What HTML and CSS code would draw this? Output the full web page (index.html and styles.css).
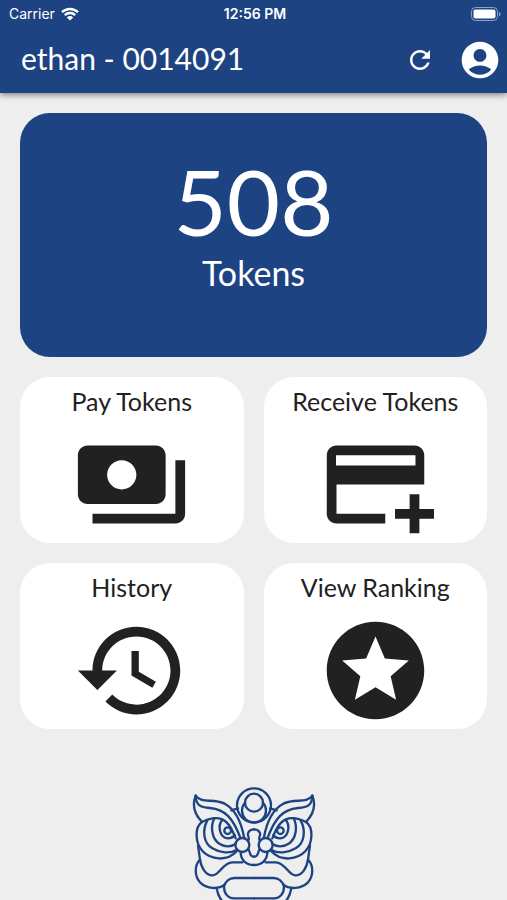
FILE: index.html
```html
<!DOCTYPE html>
<html lang="en">
<head>
  <meta charset="UTF-8">
  <meta name="viewport" content="width=device-width, initial-scale=1">
  <title>Tokens</title>
  <link rel="stylesheet" href="styles.css">
</head>
<body>

<header class="header">
  <div class="status">
    <div class="carrier">
      <span>Carrier</span>
      <svg class="wifi" viewBox="0 0 18 14" aria-hidden="true">
        <path d="M1 5.2a11.5 11.5 0 0 1 16 0M3.8 8.1a7.5 7.5 0 0 1 10.4 0" fill="none" stroke="#fff" stroke-width="2.4"/>
        <path d="M9 13.6 5.8 10.4a4.6 4.6 0 0 1 6.4 0z" fill="#fff"/>
      </svg>
    </div>
    <span class="time">12:56 PM</span>
    <svg class="battery" viewBox="0 0 30 14" aria-hidden="true">
      <rect x=".5" y=".5" width="26" height="13" rx="4" fill="none" stroke="#8ea3c6"/>
      <rect x="2.5" y="2.5" width="22" height="9" rx="2" fill="#fff"/>
      <path d="M28 4.7c2 .8 2 3.8 0 4.6z" fill="#8ea3c6"/>
    </svg>
  </div>
  <div class="toolbar">
    <h1 class="title">ethan - 0014091</h1>
    <button class="icon-button" aria-label="Refresh">
      <svg class="refresh" viewBox="0 0 24 24"><path d="M17.65 6.35C16.2 4.9 14.21 4 12 4c-4.42 0-7.99 3.58-7.99 8s3.57 8 7.99 8c3.73 0 6.84-2.55 7.73-6h-2.08c-.82 2.33-3.04 4-5.65 4-3.31 0-6-2.69-6-6s2.69-6 6-6c1.66 0 3.14.69 4.22 1.78L13 11h7V4l-2.35 2.35z"/></svg>
    </button>
    <button class="icon-button" aria-label="Account">
      <svg class="account" viewBox="0 0 24 24"><path d="M12 2C6.48 2 2 6.48 2 12s4.48 10 10 10 10-4.48 10-10S17.52 2 12 2zm0 4c1.93 0 3.5 1.57 3.5 3.5S13.93 13 12 13s-3.5-1.57-3.5-3.5S10.07 6 12 6zm0 14c-2.03 0-4.43-.82-6.14-2.88C7.55 15.8 9.68 15 12 15s4.45.8 6.14 2.12C16.43 19.18 14.03 20 12 20z"/></svg>
    </button>
  </div>
</header>

<main class="content">
  <section class="balance">
    <p class="amount">508</p>
    <p class="unit">Tokens</p>
  </section>

  <div class="menu">
    <button class="card">
      <span class="label">Pay Tokens</span>
      <svg class="card-icon" viewBox="0 0 24 24" aria-hidden="true"><path d="M19 14V6c0-1.1-.9-2-2-2H3c-1.1 0-2 .9-2 2v8c0 1.1.9 2 2 2h14c1.1 0 2-.9 2-2zm-9-1c-1.66 0-3-1.34-3-3s1.34-3 3-3 3 1.34 3 3-1.34 3-3 3zm13-6v11c0 1.1-.9 2-2 2H4v-2h17V7h2z"/></svg>
    </button>
    <button class="card">
      <span class="label">Receive Tokens</span>
      <svg class="card-icon" viewBox="0 0 24 24" aria-hidden="true"><path d="M20 4H4c-1.11 0-1.99.89-1.99 2L2 18c0 1.11.89 2 2 2h10v-2H4v-6h18V6c0-1.11-.89-2-2-2zm.2 4.1H3.9V6h16.3v2.1zM24 17v2h-3v3h-2v-3h-3v-2h3v-3h2v3h3z"/></svg>
    </button>
    <button class="card">
      <span class="label">History</span>
      <svg class="card-icon" viewBox="0 0 24 24" aria-hidden="true"><path d="M13 3c-4.97 0-9 4.03-9 9H1l3.89 3.89.07.14L9 12H6c0-3.87 3.13-7 7-7s7 3.13 7 7-3.13 7-7 7c-1.93 0-3.68-.79-4.94-2.06l-1.42 1.42C8.27 19.99 10.51 21 13 21c4.97 0 9-4.03 9-9s-4.03-9-9-9zm-1 5v5l4.28 2.54.72-1.21-3.5-2.08V8H12z"/></svg>
    </button>
    <button class="card">
      <span class="label">View Ranking</span>
      <svg class="card-icon" viewBox="0 0 24 24" aria-hidden="true"><path d="M11.99 2C6.47 2 2 6.48 2 12s4.47 10 9.99 10C17.52 22 22 17.52 22 12S17.52 2 11.99 2zm4.24 16L12 15.45 7.77 18l1.12-4.81-3.73-3.23 4.92-.42L12 5l1.92 4.53 4.92.42-3.73 3.23L16.23 18z"/></svg>
    </button>
  </div>

  <!-- lion head: left half is drawn once and mirrored -->
  <svg class="lion" viewBox="36 36 372 390" aria-hidden="true">
    <g id="half">
      <path d="M47 62C35 92 45 119 66 141C86 131 108 126 126 133C148 142 158 168 167 190"/>
      <path d="M47 62C66 88 98 68 134 86C168 104 184 143 192 186"/>
      <path d="M47 62C48 90 60 97 90 99C137 103 160 132 181 188"/>
      <path d="M154 106L174 100"/>
      <path d="M66 141C44 156 44 203 68 229C91 253 140 262 170 229"/>
      <path d="M82 136C66 166 70 204 97 220C120 234 150 237 171 224"/>
      <path d="M103 130C90 156 96 192 118 206C134 216 152 216 167 207"/>
      <path d="M127 134C111 154 120 188 143 190C153 190 160 186 164 180"/>
      <circle cx="143" cy="167" r="10"/>
      <circle cx="187" cy="210" r="21"/>
      <path d="M205 196C211 187 199 181 205 172Q210 163 222 163"/>
      <path d="M205 222C211 229 207 245 222 245"/>
      <path d="M182 232C182 257 201 270 222 270"/>
      <path d="M54 211L60 254C43 271 43 302 60 322C80 342 116 344 134 329"/>
      <path d="M60 253C64 280 78 302 99 301C120 299 128 263 157 262H187"/>
      <path d="M222 309H163C148 309 136 320 132 335C132 354 143 370 162 370H222"/>
      <path d="M110 339C116 379 144 412 222 412"/>
    </g>
    <use href="#half" transform="translate(444) scale(-1 1)"/>
    <circle cx="222" cy="91" r="51"/>
    <path d="M195 83A36 36 0 1 0 249 83"/>
    <circle cx="222" cy="83" r="27"/>
  </svg>
</main>

</body>
</html>
```

FILE: styles.css
```css
* {
  box-sizing: border-box;
}
body {
  margin: 0;
  height: 100vh;
  display: flex;
  flex-direction: column;
  overflow: hidden;
  background: #eeeeee;
  font-family: Lato, sans-serif;
  color: #212121;
}
.header {
  flex: none;
  background: #1d4382;
  color: white;
  box-shadow: 0 2px 6px rgba(0, 0, 0, 0.45);
}
.status {
  display: grid;
  grid-template-columns: 1fr auto 1fr;
  align-items: center;
  height: 27px;
  padding: 0 6px 0 9px;
  font-family: Inter, sans-serif;
  font-size: 14px;
}
.carrier {
  display: flex;
  align-items: center;
  gap: 6px;
}
.wifi {
  width: 18px;
  height: 14px;
}
.time {
  font-weight: 600;
}
.battery {
  width: 30px;
  height: 14px;
  justify-self: end;
}
.toolbar {
  display: flex;
  align-items: center;
  height: 66px;
  padding: 0 5px 0 21px;
}
.title {
  flex: 1;
  margin: 0;
  padding-bottom: 4px;
  font-size: 30px;
  font-weight: 400;
  line-height: 40px;
}
.icon-button {
  display: flex;
  justify-content: center;
  width: 60px;
  padding: 0;
  border: 0;
  background: none;
  fill: white;
}
.icon-button:last-child {
  width: 44px;
  margin-left: 8px;
}
.refresh {
  width: 30px;
  height: 30px;
}
.account {
  width: 44px;
  height: 44px;
}
.content {
  flex: 1;
  min-height: 0;
  padding: 20px 20px 0;
}
.balance {
  height: 244px;
  padding-top: 36px;
  border-radius: 30px;
  background: #1d4382;
  color: white;
  text-align: center;
}
.amount {
  margin: 0;
  font-size: 92px;
  line-height: 104px;
}
.unit {
  margin: 0;
  font-size: 34px;
  line-height: 40px;
}
.menu {
  display: grid;
  grid-template-columns: 1fr 1fr;
  gap: 20px;
  margin-top: 20px;
}
.card {
  display: flex;
  flex-direction: column;
  align-items: center;
  gap: 9px;
  padding: 8px 0 0;
  border: 0;
  border-radius: 30px;
  background: white;
  color: #212121;
  font-family: inherit;
}
.label {
  font-size: 25px;
  line-height: 32px;
}
.card-icon {
  width: 117px;
  height: 117px;
  fill: #212121;
}
.lion {
  display: block;
  width: 124px;
  height: 130px;
  margin: 58px auto 0;
  fill: none;
  stroke: #1d4382;
  stroke-width: 7;
  stroke-linecap: round;
  stroke-linejoin: round;
}
```
